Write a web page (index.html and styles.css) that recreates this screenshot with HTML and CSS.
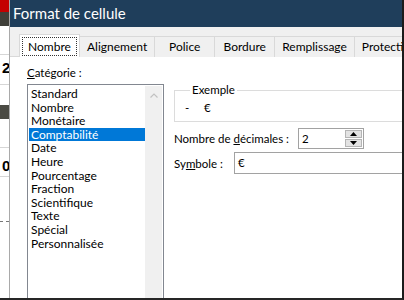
FILE: index.html
```html
<!DOCTYPE html>
<html lang="fr">
<head>
    <meta charset="UTF-8">
    <title>Format de cellule</title>
    <link rel="stylesheet" href="styles.css">
</head>
<body>
    <div class="screen">
        <div class="sheet">
            <div class="sheet-red"></div>
            <div class="sheet-dark"></div>
            <div class="sheet-row"></div>
            <div class="sheet-row tall"><span class="num">2</span></div>
            <div class="sheet-row short"></div>
            <div class="sheet-dark band"></div>
            <div class="sheet-row"></div>
            <div class="sheet-row"><span class="num low">0</span></div>
            <div class="sheet-row dashed"></div>
            <div class="sheet-row dashed thin"></div>
            <div class="sheet-row dashed thin"></div>
            <div class="sheet-row dashed thin"></div>
            <div class="sheet-row thin"></div>
            <div class="sheet-green"></div>
        </div>

        <div class="dialog">
            <div class="titlebar">Format de cellule</div>

            <div class="tabs">
                <div class="tab active"><span class="focus">Nombre</span></div>
                <div class="tab">Alignement</div>
                <div class="tab">Police</div>
                <div class="tab">Bordure</div>
                <div class="tab">Remplissage</div>
                <div class="tab">Protection</div>
            </div>

            <div class="page">
                <div class="col-left">
                    <div class="label"><u>C</u>atégorie :</div>
                    <div class="listbox">
                        <ul class="items">
                            <li>Standard</li>
                            <li>Nombre</li>
                            <li>Monétaire</li>
                            <li class="selected">Comptabilité</li>
                            <li>Date</li>
                            <li>Heure</li>
                            <li>Pourcentage</li>
                            <li>Fraction</li>
                            <li>Scientifique</li>
                            <li>Texte</li>
                            <li>Spécial</li>
                            <li>Personnalisée</li>
                        </ul>
                        <div class="scrollbar">
                            <div class="scroll-up">
                                <svg width="8" height="5" viewBox="0 0 8 5">
                                    <path d="M0.5 4.5 L4 1 L7.5 4.5" fill="none" stroke="#c2c2c2" stroke-width="1.2"/>
                                </svg>
                            </div>
                        </div>
                    </div>
                </div>

                <div class="col-right">
                    <fieldset class="sample">
                        <legend>Exemple</legend>
                        <span class="dash">-</span><span>€</span>
                    </fieldset>

                    <div class="row">
                        <div class="row-label">Nombre de <u>d</u>écimales :</div>
                        <div class="spin">
                            <span class="spin-value">2</span>
                            <div class="spin-buttons">
                                <div class="spin-btn">
                                    <svg width="7" height="4" viewBox="0 0 7 4"><path d="M0 4 L3.5 0 L7 4 Z" fill="#000"/></svg>
                                </div>
                                <div class="spin-btn">
                                    <svg width="7" height="4" viewBox="0 0 7 4"><path d="M0 0 L3.5 4 L7 0 Z" fill="#000"/></svg>
                                </div>
                            </div>
                        </div>
                    </div>

                    <div class="row">
                        <div class="row-label short">Sy<u>m</u>bole :</div>
                        <div class="combo">€</div>
                    </div>
                </div>
            </div>
        </div>
    </div>
</body>
</html>
```

FILE: styles.css
```css
* {
    margin: 0;
    padding: 0;
    box-sizing: border-box;
}

body {
    font-family: Lato, "Noto Sans", sans-serif;
    font-size: 11.5px;
    color: #000;
    overflow: hidden;
    background: #fff;
}

.screen {
    width: 404px;
    height: 300px;
    display: flex;
    border-right: 2px solid #1b1b1b;
    border-bottom: 2px solid #262626;
}

/* Feuille Excel derrière la boîte */
.sheet {
    width: 10px;
    display: flex;
    flex-direction: column;
    overflow: hidden;
    background: #fff;
    border-right: 1px solid #a9a9a9;
}

.sheet-red {
    height: 12px;
    background: #c40000;
}

.sheet-dark {
    height: 15px;
    background: #3f3f39;
}

.sheet-dark.band {
    height: 15px;
    background: #4a4a43;
}

.sheet-row {
    height: 30px;
    border-bottom: 1px solid #d6d6d6;
}

.sheet-row.tall {
    height: 31px;
}

.sheet-row.short {
    height: 20px;
    border-bottom: none;
}

.sheet-row.dashed {
    height: 46px;
    border-bottom: 1px dashed #777;
}

.sheet-row.dashed.thin {
    height: 20px;
}

.sheet-row.thin {
    height: 19px;
    border-bottom: none;
}

.sheet-green {
    flex: 1;
    background: #17a04a;
}

.num {
    display: block;
    padding: 5px 0 0 2px;
    font-family: "Liberation Sans", sans-serif;
    font-weight: bold;
    font-size: 15px;
    line-height: 15px;
}

.num.low {
    padding-top: 10px;
}

/* Boîte de dialogue */
.dialog {
    flex: 1;
    display: flex;
    flex-direction: column;
    overflow: hidden;
    background: #fff;
}

.titlebar {
    height: 27px;
    flex-shrink: 0;
    background: #1f3e5b;
    color: #fff;
    font-size: 15px;
    line-height: 27px;
    padding-left: 3px;
    white-space: nowrap;
}

.tabs {
    height: 30px;
    flex-shrink: 0;
    display: flex;
    align-items: flex-end;
    padding-left: 10px;
    background: #f0f0f0;
    border-bottom: 1px solid #d9d9d9;
    white-space: nowrap;
    font-size: 12px;
}

.tab {
    flex-shrink: 0;
    min-width: 61px;
    height: 21px;
    line-height: 19px;
    padding: 0 7px;
    text-align: center;
    border: 1px solid #d9d9d9;
    border-bottom: none;
    margin-left: -1px;
    background: #f0f0f0;
    margin-bottom: -1px;
}

.tab.active {
    width: 61px;
    height: 23px;
    padding: 2px 2px 0;
    background: #fff;
    border-color: #d9d9d9;
    position: relative;
    z-index: 1;
}

.focus {
    display: block;
    height: 19px;
    line-height: 17px;
    border: 1px dotted #333;
}

.page {
    flex: 1;
    display: flex;
    gap: 10px;
    padding: 8px 0 0 17px;
}

.col-left {
    width: 137px;
    flex-shrink: 0;
}

.label {
    height: 16px;
    line-height: 16px;
}

.listbox {
    margin-top: 3px;
    height: 230px;
    display: flex;
    border: 1px solid #828790;
    padding: 1px;
}

.items {
    list-style: none;
    width: 116px;
    padding-top: 1px;
    font-size: 12px;
}

.items li {
    height: 13.6px;
    line-height: 13.6px;
    padding-left: 2px;
    white-space: nowrap;
}

.items li.selected {
    background: #0078d7;
    color: #fff;
}

.scrollbar {
    width: 17px;
    background: #f0f0f0;
}

.scroll-up {
    height: 17px;
    display: flex;
    justify-content: center;
    align-items: center;
    padding-top: 2px;
}

.col-right {
    width: 260px;
    flex-shrink: 0;
    padding-top: 18px;
}

.sample {
    height: 39px;
    border: 1px solid #dcdcdc;
    border-right: none;
    padding: 3px 0 0 10px;
}

.sample legend {
    padding: 0 2px;
    margin-left: 5px;
    line-height: 14px;
}

.sample span {
    display: inline-block;
    line-height: 16px;
}

.sample .dash {
    width: 19px;
}

.row {
    display: flex;
    align-items: center;
    margin-top: 6px;
}

.row + .row {
    margin-top: 3px;
}

.row-label {
    width: 124px;
    white-space: nowrap;
}

.row-label.short {
    width: 60px;
}

.spin {
    width: 66px;
    height: 21px;
    border: 1px solid #a2a2a2;
    display: flex;
    align-items: center;
    justify-content: space-between;
    padding: 0 1px 0 3px;
}

.spin-buttons {
    display: flex;
    flex-direction: column;
    gap: 1px;
}

.spin-btn {
    width: 17px;
    height: 8px;
    background: #e3e3e3;
    border: 1px solid #b5b5b5;
    display: flex;
    justify-content: center;
    align-items: center;
}

.combo {
    flex: 1;
    height: 22px;
    line-height: 20px;
    border: 1px solid #a2a2a2;
    border-right: none;
    padding-left: 3px;
}
```
